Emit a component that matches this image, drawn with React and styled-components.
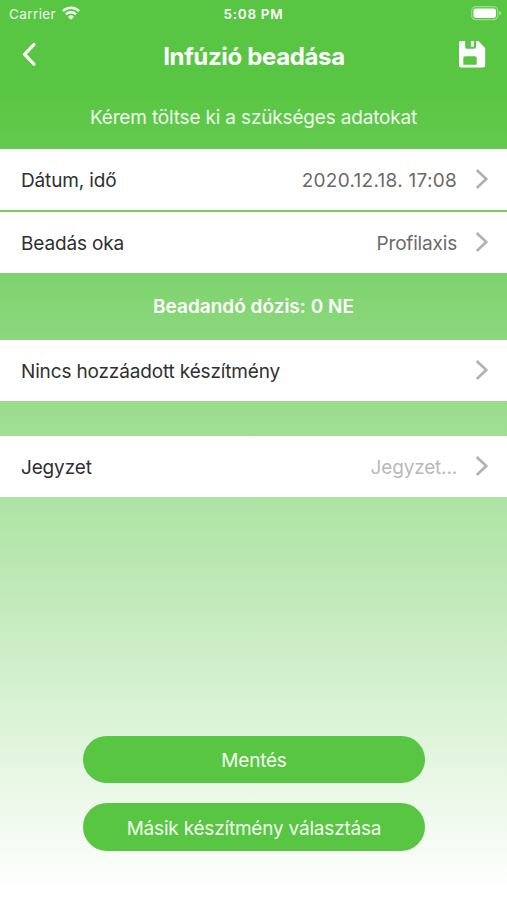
import React from "react"
import styled, { createGlobalStyle } from "styled-components"

const color = {
  primary: "#58c642",
  dark: "#303030",
  grey: "#6a6a6a",
  placeholder: "#b9b9b9",
  chevron: "#b0b0b0",
}

const GlobalStyle = createGlobalStyle`
  * {
    box-sizing: border-box;
  }
  body {
    margin: 0;
    font-family: Inter, "Liberation Sans", sans-serif;
  }
`

function Chevron() {
  return (
    <ChevronIcon viewBox="0 0 14 22">
      <path d="M1.7 2 L11.3 11 L1.7 20" />
    </ChevronIcon>
  )
}

function ListItem({ label, value, placeholder, numeric }) {
  return (
    <Row>
      <Label>{label}</Label>
      <Value $placeholder={!value} $numeric={numeric}>{value || placeholder}</Value>
      <Chevron />
    </Row>
  )
}

function App() {
  return (
    <Screen>
      <GlobalStyle />
      <StatusBar>
        <Carrier>
          Carrier
          <svg width="18" height="15" viewBox="0 0 18 15">
            <g fill="none" stroke="#fff" strokeWidth="2.4">
              <path d="M0.9 5.1 A11.6 11.6 0 0 1 17.1 5.1" />
              <path d="M3.9 8.3 A7.3 7.3 0 0 1 14.1 8.3" />
            </g>
            <path d="M9 13.7 L6 10.7 A4.3 4.3 0 0 1 12 10.7 Z" fill="#fff" />
          </svg>
        </Carrier>
        <Time>5:08 PM</Time>
        <Battery>
          <svg width="31" height="15" viewBox="0 0 31 15">
            <rect x="0.7" y="0.7" width="26" height="13" rx="4" fill="none" stroke="#fff" strokeOpacity="0.4" strokeWidth="1.2" />
            <rect x="2.4" y="2.4" width="22.6" height="9.6" rx="2.4" fill="#fff" />
            <path d="M28.2 5 Q30.2 5.6 30.2 7.2 Q30.2 8.8 28.2 9.5 Z" fill="#fff" fillOpacity="0.45" />
          </svg>
        </Battery>
      </StatusBar>
      <NavBar>
        <IconButton aria-label="Vissza">
          <svg width="14" height="24" viewBox="0 0 14 24">
            <path d="M11.9 1.6 L2.6 11.4 L11.9 21.2" fill="none" stroke="#fff" strokeWidth="3.2" strokeLinecap="round" strokeLinejoin="round" />
          </svg>
        </IconButton>
        <Title>Infúzió beadása</Title>
        <IconButton aria-label="Mentés">
          <svg width="28" height="28" viewBox="0 0 28 28">
            <path
              fill="#fff"
              fillRule="evenodd"
              d="M2.5 0 H7.2 V6 Q7.2 7.8 9 7.8 H16.2 Q18 7.8 18 6 V0 H20.4 L27.2 7.2 V24.6 Q27.2 26.4 25.4 26.4 H2.8 Q1 26.4 1 24.6 V1.5 Q1 0 2.5 0 Z M7 15.2 Q5.3 15.2 5.3 16.9 V23.8 H18.7 V16.9 Q18.7 15.2 17 15.2 Z"
            />
            <rect x="12.9" y="0" width="3.1" height="5.6" fill="#fff" />
          </svg>
        </IconButton>
      </NavBar>
      <Subtitle>Kérem töltse ki a szükséges adatokat</Subtitle>
      <List>
        <ListItem label="Dátum, idő" value="2020.12.18. 17:08" numeric />
        <ListItem label="Beadás oka" value="Profilaxis" />
      </List>
      <Dose>Beadandó dózis: 0 NE</Dose>
      <List>
        <ListItem label="Nincs hozzáadott készítmény" />
      </List>
      <Spacer />
      <List>
        <ListItem label="Jegyzet" placeholder="Jegyzet..." />
      </List>
      <Actions>
        <Button>Mentés</Button>
        <Button>Másik készítmény választása</Button>
      </Actions>
    </Screen>
  )
}

const Screen = styled.div`
  display: flex;
  flex-direction: column;
  width: 507px;
  height: 900px;
  overflow: hidden;
  background: linear-gradient(${color.primary} 90px, #fff 890px);
`

const StatusBar = styled.div`
  display: grid;
  grid-template-columns: 1fr auto 1fr;
  align-items: center;
  height: 27px;
  padding: 0 5px 0 9px;
  color: #fff;
  font-size: 13.5px;
`

const Carrier = styled.div`
  display: flex;
  align-items: center;
  gap: 6px;
  opacity: 0.92;
  letter-spacing: 0.4px;
`

const Time = styled.div`
  margin-right: 4px;
  font-weight: 600;
  letter-spacing: 0.7px;
`

const Battery = styled.div`
  display: flex;
  justify-content: flex-end;
`

const NavBar = styled.div`
  display: flex;
  align-items: center;
  justify-content: space-between;
  height: 56px;
  padding: 0 21px 0 22px;
`

const IconButton = styled.button`
  display: flex;
  width: 28px;
  padding: 0;
  border: none;
  background: none;
`

const Title = styled.h1`
  margin: 2px 0 0;
  color: #fff;
  font-size: 24px;
  font-weight: 700;
  letter-spacing: -0.35px;
`

const Subtitle = styled.p`
  height: 66px;
  margin: 0;
  color: #fff;
  font-size: 19px;
  letter-spacing: -0.17px;
  line-height: 69px;
  text-align: center;
  opacity: 0.9;
`

const List = styled.div`
  display: flex;
  flex-direction: column;
  gap: 2px;
`

const Row = styled.div`
  display: flex;
  align-items: center;
  height: 61px;
  padding: 0 18px 0 21px;
  background: #fff;
  font-size: 19px;
`

const Label = styled.span`
  padding-top: 1px;
  color: ${color.dark};
  letter-spacing: -0.15px;
`

const Value = styled.span`
  margin-left: auto;
  padding-top: 1px;
  color: ${props => (props.$placeholder ? color.placeholder : color.grey)};
  letter-spacing: ${props => (props.$numeric ? "0.28px" : "-0.18px")};
`

const ChevronIcon = styled.svg`
  width: 14px;
  height: 22px;
  margin: 0 0 2px 18px;
  fill: none;
  stroke: ${color.chevron};
  stroke-width: 2.6;
`

const Dose = styled.div`
  height: 67px;
  color: #fff;
  font-size: 19px;
  font-weight: 600;
  line-height: 67px;
  text-align: center;
`

const Spacer = styled.div`
  height: 35px;
`

const Actions = styled.div`
  display: flex;
  flex-direction: column;
  align-items: center;
  gap: 20px;
  margin-top: auto;
  padding: 0 0 49px 1px;
`

const Button = styled.button`
  width: 342px;
  height: 47.75px;
  padding: 2px 0 0;
  border: none;
  border-radius: 24px;
  background: ${color.primary};
  color: #f4fcf2;
  font-family: inherit;
  font-size: 19px;
  letter-spacing: -0.2px;
`

export default App
